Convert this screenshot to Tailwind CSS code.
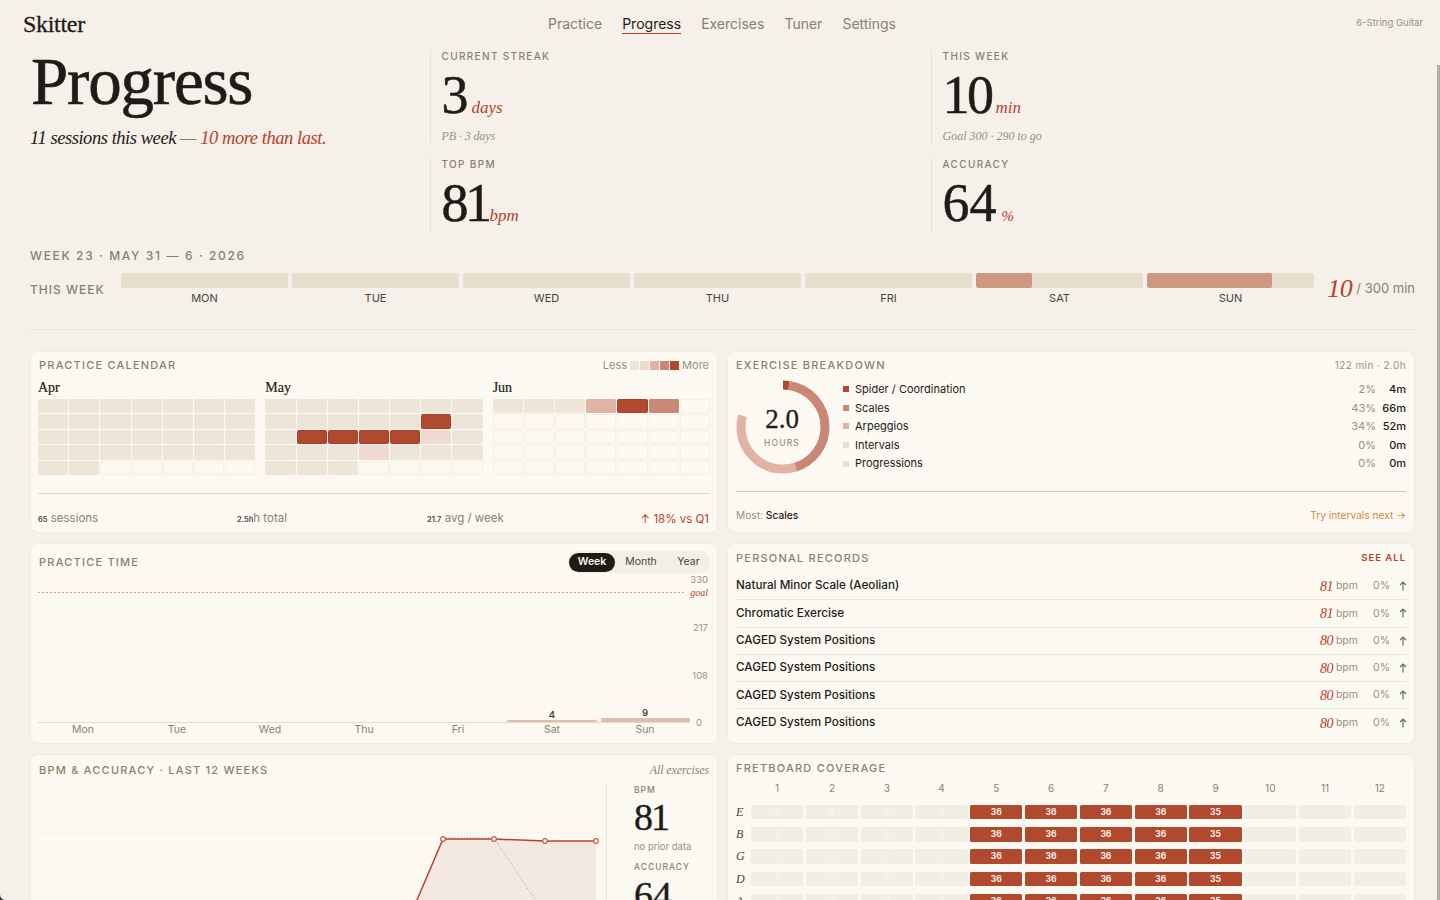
<!DOCTYPE html>
<html lang="en">
<head>
  <meta charset="UTF-8">
  <meta name="viewport" content="width=device-width, initial-scale=1.0">
  <title>Skitter - Progress</title>
  <script src="https://cdn.jsdelivr.net/npm/@tailwindcss/browser@4"></script>
</head>
<body class="relative h-[900px] overflow-hidden bg-[#f5f0e9] font-[Inter,sans-serif] text-[#1f1b16]">

  <!-- Header -->
  <header class="grid grid-cols-[1fr_auto_1fr] items-center h-[47px] pl-[21px] pr-[17px]">
    <div class="ml-[2px] font-['Liberation_Serif',serif] text-[24px] tracking-[-0.3px] [-webkit-text-stroke:0.3px]">Skitter</div>
    <nav class="flex gap-[20px] mt-[2px] text-[14px] leading-[18px] text-[#8a7f70]">
      <a class="border-b border-transparent">Practice</a>
      <a class="text-[#1f1b16] border-b border-[#b0432a]">Progress</a>
      <a class="border-b border-transparent">Exercises</a>
      <a class="border-b border-transparent">Tuner</a>
      <a class="border-b border-transparent">Settings</a>
    </nav>
    <div class="text-right text-[9.5px] text-[#9a9083]">6-String Guitar</div>
  </header>

  <main class="pl-[30px] pr-[25px]">
    <!-- Hero + stats -->
    <section class="grid grid-cols-[400px_501px_1fr] grid-rows-[93px_75px] gap-y-[15px] mt-[3px]">
      <div class="row-span-2">
        <h1 class="font-['Liberation_Serif',serif] text-[67px] leading-[62px] tracking-[-1.2px] pl-[1px] [-webkit-text-stroke:0.6px]">Progress</h1>
        <p class="font-['Liberation_Serif',serif] italic text-[18.5px] mt-[13px] tracking-[-0.45px]">11 sessions this week <span class="text-[#8a7f70]">—</span> <span class="text-[#b8412a]">10 more than last.</span></p>
      </div>
      <div class="border-l border-[#e6dfd2] pl-[10.5px]">
        <div class="text-[10px] leading-[12px] tracking-[1.35px] text-[#8a7f70] font-medium">CURRENT STREAK</div>
        <div class="flex items-baseline gap-[3px] font-['Liberation_Serif',serif] mt-[9px] h-[48px]"><span class="text-[54px] leading-[48px] [-webkit-text-stroke:0.5px]">3</span><span class="italic text-[17px] text-[#b8412a]">days</span></div>
        <div class="font-['Liberation_Serif',serif] italic text-[12px] tracking-[-0.1px] text-[#9a9083] mt-[8px]">PB · 3 days</div>
      </div>
      <div class="border-l border-[#e6dfd2] pl-[10.5px]">
        <div class="text-[10px] leading-[12px] tracking-[1.35px] text-[#8a7f70] font-medium">THIS WEEK</div>
        <div class="flex items-baseline gap-[4px] font-['Liberation_Serif',serif] mt-[9px] h-[48px]"><span class="text-[54px] leading-[48px] tracking-[-2.5px] [-webkit-text-stroke:0.5px]">10</span><span class="italic text-[17px] text-[#b8412a]">min</span></div>
        <div class="font-['Liberation_Serif',serif] italic text-[12px] text-[#9a9083] mt-[8px]">Goal 300 · 290 to go</div>
      </div>
      <div class="border-l border-[#e6dfd2] pl-[10.5px]">
        <div class="text-[10px] leading-[12px] tracking-[1.35px] text-[#8a7f70] font-medium">TOP BPM</div>
        <div class="flex items-baseline gap-[1px] font-['Liberation_Serif',serif] mt-[9px] h-[48px]"><span class="text-[54px] leading-[48px] tracking-[-3.5px] [-webkit-text-stroke:0.5px]">81</span><span class="italic text-[17px] text-[#b8412a]">bpm</span></div>
      </div>
      <div class="border-l border-[#e6dfd2] pl-[10.5px]">
        <div class="text-[10px] leading-[12px] tracking-[1.35px] text-[#8a7f70] font-medium">ACCURACY</div>
        <div class="flex items-baseline gap-[5px] font-['Liberation_Serif',serif] mt-[9px] h-[48px]"><span class="text-[54px] leading-[48px] [-webkit-text-stroke:0.5px]">64</span><span class="italic text-[15px] text-[#b8412a]">%</span></div>
      </div>
    </section>

    <!-- Week strip -->
    <section class="h-[97px] border-b border-[#e8e2d7]">
      <div class="pt-[16px] text-[12px] leading-[14px] tracking-[1.63px] text-[#8a7f70] font-medium">WEEK 23 · MAY 31 — 6 · 2026</div>
      <div class="flex mt-[10px]">
        <div class="w-[91px] pt-[10px] text-[12px] leading-[14px] tracking-[1px] text-[#8a7f70] font-medium">THIS WEEK</div>
        <div id="week" class="grid grid-cols-7 gap-[4px] w-[1193px]"></div>
        <div class="ml-auto flex items-center h-[32px] text-[13px] text-[#8a7f70]"><span class="font-['Liberation_Serif',serif] italic text-[26px] leading-[28px] tracking-[-0.5px] text-[#b8412a] mr-[4px]">10</span>/ 300 min</div>
      </div>
    </section>

    <section class="grid grid-cols-2 gap-x-[9px] gap-y-[10px] mt-[21px]">
      <!-- Practice calendar -->
      <div class="h-[182px] rounded-lg border border-[#f0ebe2] bg-[#fcf9f3] px-[7px] pt-[6px]">
        <div class="flex items-center justify-between h-[14px]">
          <h2 class="pl-[1px] text-[11px] tracking-[1.22px] text-[#8a7f70] font-medium">PRACTICE CALENDAR</h2>
          <div class="flex items-center gap-[3px] pr-[1px] text-[11px] text-[#9a9083]">Less
            <span class="flex gap-[1px]">
              <i class="block size-[9px] bg-[#ede5d8]"></i><i class="block size-[9px] bg-[#efd9d1]"></i><i class="block size-[9px] bg-[#e0b3a6]"></i><i class="block size-[9px] bg-[#c98876]"></i><i class="block size-[9px] bg-[#b0492e]"></i>
            </span>More</div>
        </div>
        <div class="grid grid-cols-3 gap-x-[10px] mt-[9px]">
          <div><div class="font-['Liberation_Serif',serif] text-[14px] leading-[14px] mb-[4px] [-webkit-text-stroke:0.2px]">Apr</div><div id="cal-apr" class="grid grid-cols-7 gap-[1px]"></div></div>
          <div><div class="font-['Liberation_Serif',serif] text-[14px] leading-[14px] mb-[4px] [-webkit-text-stroke:0.2px]">May</div><div id="cal-may" class="grid grid-cols-7 gap-[1px]"></div></div>
          <div><div class="font-['Liberation_Serif',serif] text-[14px] leading-[14px] mb-[4px] [-webkit-text-stroke:0.2px]">Jun</div><div id="cal-jun" class="grid grid-cols-7 gap-[1px]"></div></div>
        </div>
        <div class="flex items-center mt-[18px] pt-[17px] border-t border-[#ddd6c9] text-[11.5px] leading-[14px] text-[#8a7f70]">
          <div class="w-[199px]"><b class="text-[7.5px] font-semibold text-[#4a443b]">65</b> sessions</div>
          <div class="w-[190px]"><b class="text-[7.5px] font-semibold text-[#4a443b]">2.5h</b>h total</div>
          <div><b class="text-[7.5px] font-semibold text-[#4a443b]">21.7</b> avg / week</div>
          <div class="ml-auto pr-[1px] text-[#b8412a]">↑ 18% vs Q1</div>
        </div>
      </div>

      <!-- Exercise breakdown -->
      <div class="h-[182px] rounded-lg border border-[#f0ebe2] bg-[#fcf9f3] px-[8px] pt-[6px]">
        <div class="flex items-center justify-between h-[14px]">
          <h2 class="text-[11px] tracking-[1.22px] text-[#8a7f70] font-medium">EXERCISE BREAKDOWN</h2>
          <div class="text-[10px] tracking-[0.4px] text-[#9a9083]">122 min · 2.0h</div>
        </div>
        <div class="flex mt-[7px] h-[96px]">
          <div class="relative w-[96px] h-[96px] -ml-[1px] shrink-0">
            <svg width="96" height="96" viewBox="0 0 96 96" class="-rotate-90">
              <circle cx="48" cy="48" r="42" fill="none" stroke="#b0492e" stroke-width="9" stroke-dasharray="6 258" />
              <circle cx="48" cy="48" r="42" fill="none" stroke="#c98876" stroke-width="9" stroke-dasharray="113 264" stroke-dashoffset="-6" />
              <circle cx="48" cy="48" r="42" fill="none" stroke="#e0b3a6" stroke-width="9" stroke-dasharray="90 264" stroke-dashoffset="-119" />
            </svg>
            <div class="absolute inset-0 flex flex-col items-center pt-[27px] pr-[2px]">
              <div class="font-['Liberation_Serif',serif] text-[27px] leading-[27px] [-webkit-text-stroke:0.3px]">2.0</div>
              <div class="text-[8.5px] tracking-[1.2px] text-[#8a7f70] mt-[4px]">HOURS</div>
            </div>
          </div>
          <div id="legend" class="flex-1 pl-[12px] pt-[1px]"></div>
        </div>
        <div class="flex items-center justify-between mt-[16px] pt-[16px] border-t border-[#cfc8ba] text-[10.2px] leading-[14px]">
          <div class="text-[#9a9083]">Most: <span class="font-medium text-[#1f1b16]">Scales</span></div>
          <div class="text-[#d08a3e]">Try intervals next →</div>
        </div>
      </div>

      <!-- Practice time -->
      <div class="h-[201px] rounded-lg border border-[#f0ebe2] bg-[#fcf9f3] px-[7px] pt-[7px]">
        <div class="flex items-center justify-between h-[22px]">
          <h2 class="pl-[1px] text-[11px] tracking-[1.22px] text-[#8a7f70] font-medium">PRACTICE TIME</h2>
          <div class="flex items-center h-[22px] w-[142px] pl-[1px] rounded-full bg-[#f3efe5] text-[10.5px] text-[#4a443b]">
            <span class="flex items-center justify-center w-[46px] h-[19px] rounded-full bg-[#1f1b16] font-semibold text-[#fcf9f3]">Week</span>
            <span class="w-[52px] text-center">Month</span>
            <span class="flex-1 text-center">Year</span>
          </div>
        </div>
        <svg width="672" height="166" viewBox="0 0 672 166" class="block font-[Inter,sans-serif]">
          <g stroke="#e8e2d7" stroke-width="1" stroke-dasharray="1 3">
            <line x1="0" x2="647" y1="6.5" y2="6.5" />
            <line x1="0" x2="647" y1="54.5" y2="54.5" />
            <line x1="0" x2="647" y1="102.5" y2="102.5" />
          </g>
          <line x1="0" x2="647" y1="19.5" y2="19.5" stroke="#e39a8a" stroke-width="1" stroke-dasharray="2 2" />
          <line x1="0" x2="652" y1="149.5" y2="149.5" stroke="#e2dccf" stroke-width="1" />
          <rect x="469" y="147" width="90" height="2" rx="1" fill="#e3bcae" />
          <rect x="563" y="145" width="89" height="4" rx="1" fill="#e3bcae" />
          <g font-size="9.5" fill="#9a9083" text-anchor="end">
            <text x="670" y="9.5">330</text>
            <text x="670" y="58">217</text>
            <text x="670" y="105.5">108</text>
            <text x="664" y="153">0</text>
          </g>
          <text x="670" y="23" font-size="10" font-style="italic" font-family="Liberation Serif" fill="#b8412a" text-anchor="end">goal</text>
          <g font-size="9.5" font-weight="600" fill="#4a443b" text-anchor="middle">
            <text x="514" y="145">4</text>
            <text x="607" y="143">9</text>
          </g>
          <g font-size="10.5" fill="#8a7f70" text-anchor="middle">
            <text x="45" y="160">Mon</text><text x="139" y="160">Tue</text><text x="232" y="160">Wed</text><text x="326" y="160">Thu</text><text x="420" y="160">Fri</text><text x="514" y="160">Sat</text><text x="607" y="160">Sun</text>
          </g>
        </svg>
      </div>

      <!-- Personal records -->
      <div class="h-[201px] rounded-lg border border-[#f0ebe2] bg-[#fcf9f3] px-[8px] pt-[7px]">
        <div class="flex items-center justify-between h-[14px]">
          <h2 class="text-[11px] tracking-[1.22px] text-[#8a7f70] font-medium">PERSONAL RECORDS</h2>
          <a class="text-[9.5px] font-semibold tracking-[1px] text-[#b8412a]">SEE ALL</a>
        </div>
        <div id="records" class="mt-[8px] -mr-[1px]"></div>
      </div>

      <!-- BPM & accuracy -->
      <div class="h-[200px] rounded-lg border border-[#f0ebe2] bg-[#fcf9f3] px-[7px] pt-[6px]">
        <div class="flex items-center justify-between h-[18px]">
          <h2 class="pl-[1px] text-[11px] tracking-[1.22px] text-[#8a7f70] font-medium">BPM &amp; ACCURACY · LAST 12 WEEKS</h2>
          <div class="pr-[1px] font-['Liberation_Serif',serif] italic text-[12px] tracking-[-0.1px] text-[#8a7f70]">All exercises</div>
        </div>
        <div class="flex mt-[5px]">
          <svg width="562" height="130" viewBox="0 0 562 130" class="block shrink-0">
            <g stroke="#e8e2d7" stroke-width="1" stroke-dasharray="1 3">
              <line x1="0" x2="558" y1="6.5" y2="6.5" />
              <line x1="0" x2="558" y1="48.5" y2="48.5" />
              <line x1="0" x2="558" y1="89.5" y2="89.5" />
            </g>
            <polygon points="405,55 456,55 507,57 558,57 558,130 373,130" fill="#f4e9e1" />
            <polyline points="405,54 456,54 520,150" fill="none" stroke="#a09688" stroke-width="1" stroke-dasharray="1 2" />
            <polyline points="350,184 405,55 456,55 507,57 558,57" fill="none" stroke="#b8412a" stroke-width="1.5" />
            <g fill="#fcf9f3" stroke="#c2604a" stroke-width="1.2">
              <circle cx="405" cy="55" r="2.3" /><circle cx="456" cy="55" r="2.3" /><circle cx="507" cy="57" r="2.3" /><circle cx="558" cy="57" r="2.3" />
            </g>
          </svg>
          <div class="ml-[6px] pl-[27px] border-l border-[#ece6da] h-[130px]">
            <div class="text-[8.5px] leading-[12px] tracking-[1px] text-[#8a7f70] font-medium">BPM</div>
            <div class="font-['Liberation_Serif',serif] text-[38px] leading-[38px] tracking-[-2px] mt-[2px] [-webkit-text-stroke:0.4px]">81</div>
            <div class="text-[9.5px] text-[#9a9083] mt-[4px]">no prior data</div>
            <div class="text-[8.5px] leading-[12px] tracking-[1px] text-[#8a7f70] font-medium mt-[7px]">ACCURACY</div>
            <div class="font-['Liberation_Serif',serif] text-[38px] leading-[38px] mt-[3px] [-webkit-text-stroke:0.4px]">64<span class="italic text-[12px] text-[#8a7f70] ml-[2px] [-webkit-text-stroke:0px]">%</span></div>
          </div>
        </div>
      </div>

      <!-- Fretboard coverage -->
      <div class="h-[200px] rounded-lg border border-[#f0ebe2] bg-[#fcf9f3] px-[8px] pt-[6px]">
        <h2 class="text-[11px] leading-[14px] tracking-[1.22px] text-[#8a7f70] font-medium">FRETBOARD COVERAGE</h2>
        <div id="fret" class="grid grid-cols-[12.5px_repeat(12,1fr)] gap-x-[2.5px] gap-y-[7.7px] mt-[7px]"></div>
      </div>
    </section>
  </main>

  <!-- Overlay scrollbar and window corner -->
  <div class="absolute right-0 top-[65px] bottom-0 w-[3px] bg-[#b5b0a7]"></div>
  <svg width="6" height="6" viewBox="0 0 6 6" class="absolute left-0 bottom-0"><path d="M0 0 Q0 6 6 6 L0 6 Z" fill="#2a2a2a" /></svg>

  <script>
    // Week strip
    const weekDays = [['MON', ''], ['TUE', ''], ['WED', ''], ['THU', ''], ['FRI', ''], ['SAT', 'w-1/3'], ['SUN', 'w-3/4']];
    document.getElementById('week').innerHTML = weekDays.map(([day, fill]) => `
      <div>
        <div class="h-[15px] rounded-[2px] bg-[#e6dfce] overflow-hidden">${fill ? `<div class="h-full rounded-[2px] bg-[#cf9680] ${fill}"></div>` : ''}</div>
        <div class="text-center text-[11px] leading-[14px] mt-[3px] text-[#4a443b]">${day}</div>
      </div>`).join('');

    // Calendar cells: . empty, b base, l light, m mid, s strong, d dark
    const cellClass = {
      '.': 'border border-dotted border-[#ebe5da]',
      b: 'bg-[#ede5d8]',
      l: 'bg-[#efd9d1]',
      m: 'bg-[#e0b3a6]',
      s: 'bg-[#c98876]',
      d: 'bg-[#b0492e] border border-[#a83f24]'
    };
    const months = {
      'cal-apr': 'bbbbbbb bbbbbbb bbbbbbb bbbbbbb bb.....',
      'cal-may': 'bbbbbbb bbbbbdb bddddlb bbblbbb bbb....',
      'cal-jun': 'bbbmds. ....... ....... ....... .......'
    };
    Object.entries(months).forEach(([id, rows]) => {
      document.getElementById(id).innerHTML = rows.replace(/ /g, '').split('')
        .map(c => `<div class="h-[14.4px] rounded-[1.5px] ${cellClass[c]}"></div>`).join('');
    });

    // Exercise legend
    const exercises = [
      ['Spider / Coordination', 'bg-[#b0492e]', '2%', '4m'],
      ['Scales', 'bg-[#c98876]', '43%', '66m'],
      ['Arpeggios', 'bg-[#e0b3a6]', '34%', '52m'],
      ['Intervals', 'bg-[#f0dbd4]', '0%', '0m'],
      ['Progressions', 'bg-[#f0dbd4]', '0%', '0m']
    ];
    document.getElementById('legend').innerHTML = exercises.map(([name, color, pct, mins]) => `
      <div class="flex items-center h-[18.6px] text-[11px]">
        <i class="block size-[6px] mr-[6px] ${color}"></i>
        <span>${name}</span>
        <span class="ml-auto text-[#9a9083]">${pct}</span>
        <span class="w-[30px] text-right font-medium">${mins}</span>
      </div>`).join('');

    // Personal records
    const records = [
      ['Natural Minor Scale (Aeolian)', 81],
      ['Chromatic Exercise', 81],
      ['CAGED System Positions', 80],
      ['CAGED System Positions', 80],
      ['CAGED System Positions', 80],
      ['CAGED System Positions', 80]
    ];
    document.getElementById('records').innerHTML = records.map(([name, bpm], i) => `
      <div class="flex items-center h-[27.3px] ${i < 5 ? 'border-b border-[#ece6da]' : ''}">
        <span class="text-[11.7px] font-medium">${name}</span>
        <span class="ml-auto font-['Liberation_Serif',serif] italic text-[14px] tracking-[-0.5px] text-[#b8412a]">${bpm}</span>
        <span class="ml-[3px] text-[10.5px] text-[#9a9083]">bpm</span>
        <span class="w-[32px] text-right text-[10.5px] text-[#9a9083]">0%</span>
        <span class="flex justify-end w-[17px]">
          <svg width="8" height="10" viewBox="0 0 8 10" fill="none" stroke="#5a7d4a" stroke-width="1.2"><path d="M4 9.5V1M1 4l3-3 3 3" /></svg>
        </span>
      </div>`).join('');

    // Fretboard grid
    const strings = ['E', 'B', 'G', 'D', 'A', 'E'];
    const fretHeads = [1, 2, 3, 4, 5, 6, 7, 8, 9, 10, 11, 12];
    const hot = { 5: 36, 6: 36, 7: 36, 8: 36, 9: 35 };
    let fretHtml = '<div></div>' + fretHeads.map(n => `<div class="text-center text-[10px] leading-[12px] h-[12px] mb-[3.3px] text-[#8a7f70]">${n}</div>`).join('');
    strings.forEach(s => {
      fretHtml += `<div class="font-['Liberation_Serif',serif] italic text-[12px] leading-[14.5px] text-[#4a443b]">${s}</div>`;
      fretHeads.forEach(n => {
        if (hot[n]) {
          fretHtml += `<div class="h-[14.5px] rounded-[1.5px] bg-[#b0492e] text-center text-[8.5px] leading-[14.5px] font-bold text-[#fcf0e8]">${hot[n]}</div>`;
        } else {
          fretHtml += `<div class="h-[14.5px] rounded-[1.5px] bg-[#f2eee3] text-center text-[8.5px] leading-[14.5px] text-[#fbf8f1]">${n < 5 ? 2 : ''}</div>`;
        }
      });
    });
    document.getElementById('fret').innerHTML = fretHtml;
  </script>
</body>
</html>
